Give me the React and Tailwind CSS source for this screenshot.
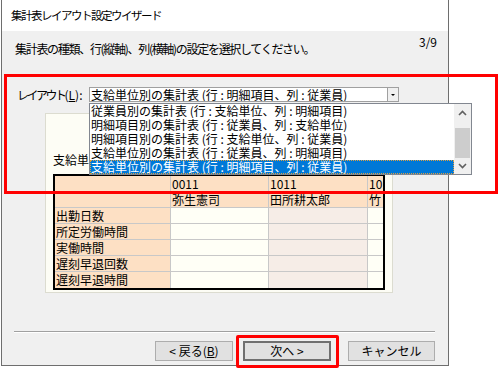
import React from "react";

const items = [
  "従業員別の集計表 (行 : 支給単位、列 : 明細項目)",
  "明細項目別の集計表 (行 : 従業員、列 : 支給単位)",
  "明細項目別の集計表 (行 : 支給単位、列 : 従業員)",
  "支給単位別の集計表 (行 : 従業員、列 : 明細項目)",
  "支給単位別の集計表 (行 : 明細項目、列 : 従業員)",
];

const rowLabels = ["出勤日数", "所定労働時間", "実働時間", "遅刻早退回数", "遅刻早退時間"];

function Chevron({ up }) {
  return (
    <svg width="9" height="6" viewBox="0 0 9 6">
      <path d={up ? "M1 5 L4.5 1.5 L8 5" : "M1 1 L4.5 4.5 L8 1"} fill="none" stroke="#606060" strokeWidth="1.6" />
    </svg>
  );
}

function Cell({ children, className = "" }) {
  return <div className={`h-[16px] leading-[16px] pl-[1px] overflow-hidden whitespace-nowrap border-r border-b border-[#c8c8c8] ${className}`}>{children}</div>;
}

function PreviewTable() {
  const cols = "grid-cols-[116px_98px_99px_15px]";
  return (
    <div className="w-[332px] border-2 border-black bg-white overflow-hidden">
      <div className={`grid ${cols}`}>
        <Cell className="bg-[#fde0c4]"></Cell>
        <Cell className="bg-[#fde0c4]">0011</Cell>
        <Cell className="bg-[#fde0c4]">1011</Cell>
        <Cell className="bg-[#fde0c4] border-r-0">101</Cell>
        <Cell className="bg-[#fde0c4]"></Cell>
        <Cell className="bg-[#fde0c4]">弥生憲司</Cell>
        <Cell className="bg-[#fde0c4]">田所耕太郎</Cell>
        <Cell className="bg-[#fde0c4] border-r-0">竹</Cell>
        {rowLabels.map((label, i) => (
          <React.Fragment key={label}>
            <Cell className={`bg-[#fde0c4] ${i === rowLabels.length - 1 ? "border-b-0" : ""}`}>{label}</Cell>
            <Cell className={`bg-[#fffff6] ${i === rowLabels.length - 1 ? "border-b-0" : ""}`}></Cell>
            <Cell className={`bg-[#f6ede7] ${i === rowLabels.length - 1 ? "border-b-0" : ""}`}></Cell>
            <Cell className={`bg-[#fffff6] border-r-0 ${i === rowLabels.length - 1 ? "border-b-0" : ""}`}></Cell>
          </React.Fragment>
        ))}
      </div>
    </div>
  );
}

function Button({ children, primary }) {
  return (
    <div
      className={`h-[20px] flex items-center justify-center bg-[#e1e1e1] text-[12px] ${
        primary ? "border-2 border-[#707070]" : "border border-[#adadad]"
      }`}
    >
      {children}
    </div>
  );
}

export default function App() {
  return (
    <div
      className="relative w-[498px] h-[369px] bg-white overflow-hidden text-black text-[12px]"
      style={{ fontFamily: '"Noto Sans CJK JP", "Noto Sans", sans-serif' }}
    >
      <div className="ml-px w-[448px] h-[366px] border-x border-b border-[#6e6e6e] flex flex-col">
        <div className="h-[31px] bg-white pl-[9px] leading-[31px] text-[11.5px] tracking-[-1.5px] whitespace-nowrap">集計表レイアウト設定ウイザード</div>
        <div className="flex-1 bg-[#f0f0f0] flex flex-col">
          <div className="flex justify-between">
            <div className="mt-[10px] ml-[13px] leading-[16px] tracking-[-1.3px] whitespace-nowrap">集計表の種類、行(縦軸)、列(横軸)の設定を選択してください。</div>
            <div className="mt-[3px] mr-[11px] leading-[16px]">3/9</div>
          </div>
          <div className="mt-[30px] flex items-center h-[15px]">
            <div className="ml-[15px] w-[72px] whitespace-nowrap">
              <span className="tracking-[-2.5px]">レイアウト</span>(<span className="underline">L</span>):
            </div>
            <div className="w-[310px] h-[15px] bg-white border border-[#a0a0a0] flex items-center">
              <div className="flex-1 pl-[1px] leading-[13px] whitespace-nowrap overflow-hidden">支給単位別の集計表 (行 : 明細項目、列 : 従業員)</div>
              <div className="w-[11px] h-[13px] bg-[#f0f0f0] border-l border-[#a0a0a0] flex items-center justify-center">
                <div className="w-0 h-0 border-x-[2px] border-x-transparent border-t-[2px] border-t-black"></div>
              </div>
            </div>
          </div>
          <div className="mt-[11px] ml-[43px] w-[348px] h-[180px] border border-[#dcdcd0] bg-[#fdfdf5] pl-[7px]">
            <div className="mt-[38px] leading-[16px]">支給単位</div>
            <div className="mt-[6px]">
              <PreviewTable />
            </div>
          </div>
          <div className="mt-[38px] ml-[12px] w-[421px] border-t border-[#a0a0a0] border-b border-b-white"></div>
          <div className="mt-[8px] flex justify-end gap-[10px] pr-[13px]">
            <div className="w-[78px]">
              <Button>&lt; 戻る(<span className="underline">B</span>)</Button>
            </div>
            <div className="w-[88px] mr-[7px]">
              <Button primary>次へ &gt;</Button>
            </div>
            <div className="w-[87px]">
              <Button>キャンセル</Button>
            </div>
          </div>
        </div>
      </div>

      <div className="absolute left-[89px] top-[103px] w-[383px] h-[72px] bg-white border border-[#828790] flex">
        <div className="flex-1 flex flex-col">
          {items.map((t, i) => (
            <div
              key={t}
              className={`h-[14px] leading-[14px] whitespace-nowrap overflow-hidden pl-[1px] ${
                i === items.length - 1 ? "bg-[#0078d7] text-white outline-1 outline-dotted outline-[#e0a040] -outline-offset-1" : ""
              }`}
            >
              {t}
            </div>
          ))}
        </div>
        <div className="w-[17px] bg-[#f0f0f0] flex flex-col items-center">
          <div className="h-[18px] flex items-center justify-center"><Chevron up /></div>
          <div className="mt-[6px] w-[15px] h-[30px] bg-[#cdcdcd]"></div>
          <div className="flex-1 flex items-center justify-center"><Chevron /></div>
        </div>
      </div>

      <div className="absolute left-[4px] top-[74px] w-[494px] h-[120px] border-[3px] border-[#ff0000]"></div>
      <div className="absolute left-[236px] top-[335px] w-[103px] h-[33px] border-[3px] border-[#ff0000] rounded-[2px]"></div>
    </div>
  );
}
